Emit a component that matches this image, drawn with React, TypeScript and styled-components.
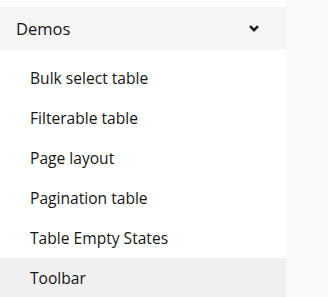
import React from "react";
import styled, { createGlobalStyle } from "styled-components";

const Global = createGlobalStyle`
  html, body { margin: 0; padding: 0; background: #f9f9f9; }
  body { font-family: "Open Sans", "Noto Sans", sans-serif; color: #151515; }
`;

const Page = styled.div`
  display: flex;
  min-height: 297px;
  background: #f9f9f9;
`;

const Sidebar = styled.nav`
  width: 286px;
  background: #fff;
  padding-top: 7px;
  display: flex;
  flex-direction: column;
`;

const GroupHeader = styled.button`
  display: flex;
  align-items: center;
  justify-content: space-between;
  height: 43px;
  padding: 0 27px 0 16px;
  border: none;
  background: #f5f5f5;
  font: inherit;
  font-size: 16.5px;
  color: #151515;
  text-align: left;
  cursor: pointer;
`;

const List = styled.ul`
  list-style: none;
  margin: 0;
  padding: 8px 0 0;
`;

const Item = styled.li<{ $active?: boolean }>`
  height: 40px;
  display: flex;
  align-items: center;
  padding-left: 30px;
  font-size: 15.6px;
  color: #151515;
  background: ${(p) => (p.$active ? "#f0f0f0" : "transparent")};
`;

const Chevron = () => (
  <svg width="10" height="7" viewBox="0 0 10 7" aria-hidden="true">
    <path d="M1 1.2 L5 5.2 L9 1.2" fill="none" stroke="#151515" strokeWidth="2.4" />
  </svg>
);

const items = [
  "Bulk select table",
  "Filterable table",
  "Page layout",
  "Pagination table",
  "Table Empty States",
  "Toolbar",
];

export default function App() {
  return (
    <Page>
      <Global />
      <Sidebar>
        <GroupHeader>
          <span>Demos</span>
          <Chevron />
        </GroupHeader>
        <List>
          {items.map((t) => (
            <Item key={t} $active={t === "Toolbar"}>
              {t}
            </Item>
          ))}
        </List>
      </Sidebar>
    </Page>
  );
}
